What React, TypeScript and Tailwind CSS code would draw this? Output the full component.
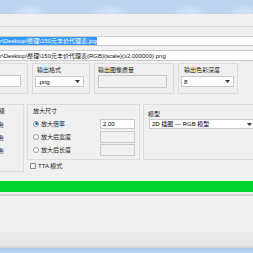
import React from "react";

const font = { fontFamily: '"Liberation Sans", "Noto Sans CJK SC", sans-serif' };

function Combo({ w, text }: { w: string; text: string }) {
  return (
    <div className={`${w} h-[11px] bg-white border border-[#c9c9c9] flex items-center justify-between pl-[2px] pr-[3px]`}>
      <span className="text-[6px] leading-none">{text}</span>
      <svg width="5" height="3" viewBox="0 0 5 3"><path d="M0 0h5L2.5 3z" fill="#333" /></svg>
    </div>
  );
}

function Radio({ on, label }: { on?: boolean; label: string }) {
  return (
    <div className="flex items-center gap-[2px] h-[13px]">
      <div className="w-[6px] h-[6px] rounded-full border border-[#9a9a9a] bg-white flex items-center justify-center">
        {on && <div className="w-[3px] h-[3px] rounded-full bg-[#2a6bd0]" />}
      </div>
      <span className="text-[6px] leading-none text-[#222]">{label}</span>
    </div>
  );
}

export default function App() {
  return (
    <div className="w-[253px] h-[253px] overflow-hidden bg-[#f0f0f0] relative" style={font}>
      {/* title bar */}
      <div className="h-[14px] bg-[#bdd4ee] bg-[radial-gradient(ellipse_18px_8px_at_30px_12px,#d6e6f7,transparent),radial-gradient(ellipse_20px_8px_at_110px_12px,#d3e4f6,transparent),radial-gradient(ellipse_18px_8px_at_190px_12px,#d3e4f6,transparent),radial-gradient(ellipse_16px_8px_at_245px_12px,#d3e4f6,transparent)]" />
      <div className="h-[13px] bg-[#f0f0f0] border-b border-[#dcdcdc]" />
      <div className="h-[9px]" />
      {/* input 1 */}
      <div className="h-[10px] bg-white border-y border-[#c9c9c9] flex items-center">
        <span className="bg-[#3399ff] text-white text-[6px] leading-[8px] whitespace-nowrap">r\Desktop\整理\150元丰价代理表.jpg</span>
      </div>
      <div className="h-[4px]" />
      <div className="h-[11px] bg-white border-y border-[#c9c9c9] flex items-center">
        <span className="text-[6px] leading-none whitespace-nowrap text-[#111]">r\Desktop\整理\150元丰价代理表(RGB)(scale)(x2.000000).png</span>
      </div>
      {/* row 1 groups */}
      <div className="flex mt-[2px] h-[31px]">
        <div className="w-[28px] border border-l-0 border-[#dcdcdc] flex items-end pb-[6px]">
          <div className="w-[21px] h-[12px] bg-white border border-l-0 border-[#c9c9c9]" />
        </div>
        <div className="w-[58px] ml-[4px] border border-[#dcdcdc] px-[2px] pt-[2px]">
          <div className="text-[6px] leading-[8px] pl-[2px] text-[#222]">输出格式</div>
          <div className="mt-[2px]"><Combo w="w-[49px]" text=".png" /></div>
        </div>
        <div className="w-[80px] ml-[4px] border border-[#dcdcdc] px-[3px] pt-[2px]">
          <div className="text-[6px] leading-[8px] text-[#222]">输出图像质量</div>
          <div className="mt-[1px] w-[69px] h-[13px] border border-[#c6c6c6] bg-[#f0f0f0]" />
        </div>
        <div className="w-[60px] ml-[4px] border border-[#dcdcdc] px-[2px] pt-[2px]">
          <div className="text-[6px] leading-[8px] pl-[3px] text-[#222]">输出色彩深度</div>
          <div className="mt-[2px]"><Combo w="w-[53px]" text="8" /></div>
        </div>
      </div>
      {/* row 2 */}
      <div className="flex mt-[10px]">
        <div className="w-[27px] h-[68px] border border-l-0 border-[#dcdcdc] pt-[3px] text-[6px] leading-none text-[#222] overflow-hidden">
          <div className="-ml-[1px] h-[10px]">级</div>
          <div className="-ml-[2px] h-[13px] mt-[4px]">务</div>
          <div className="-ml-[2px] h-[13px]">务</div>
          <div className="-ml-[2px] h-[13px]">务</div>
        </div>
        <div className="ml-[3px] flex flex-col">
          <div className="w-[113px] h-[56px] border border-[#dcdcdc] pl-[5px] pt-[2px]">
            <div className="text-[6px] leading-[8px] text-[#222]">放大尺寸</div>
            <div className="flex">
              <div className="flex flex-col w-[67px] pt-[2px]">
                <Radio on label="放大倍率" />
                <Radio label="放大后宽度" />
                <Radio label="放大后长度" />
              </div>
              <div className="flex flex-col pt-[4px]">
                <div className="w-[35px] h-[10px] bg-white border border-[#c9c9c9] text-[6px] leading-[8px] pl-[2px]">2.00</div>
                <div className="w-[35px] h-[12px] mt-[2px] bg-[#f0f0f0] border border-[#c9c9c9]" />
                <div className="w-[35px] h-[12px] mt-[1px] bg-[#f0f0f0] border border-[#c9c9c9]" />
              </div>
            </div>
          </div>
          <div className="flex items-center gap-[2px] mt-[3px] ml-[3px]">
            <div className="w-[6px] h-[6px] border border-[#8f8f8f] bg-[#f4f4f4]" />
            <span className="text-[6px] leading-none text-[#222]">TTA 模式</span>
          </div>
        </div>
        <div className="ml-[3px] w-[110px] h-[56px] border border-r-0 border-[#dcdcdc] pl-[5px] pt-[5px]">
          <div className="text-[6px] leading-[8px] text-[#222] -ml-[1px]">模型</div>
          <div className="mt-[1px] w-[110px] h-[10px] bg-white border border-[#c9c9c9] flex items-center justify-between pl-[2px] pr-[6px]">
            <span className="text-[6px] leading-none">2D 插图 — RGB 模型</span>
            <svg width="5" height="3" viewBox="0 0 5 3"><path d="M0 0h5L2.5 3z" fill="#333" /></svg>
          </div>
        </div>
      </div>
      {/* progress */}
      <div className="absolute left-0 right-0 top-[180px]">
        <div className="h-[1px] bg-[#e6f7e6]" />
        <div className="h-[11px] bg-[#00d22e]" />
        <div className="h-[2px] bg-[#f0f0f0]" />
        <div className="h-[2px] bg-[#d4d4d4]" />
        <div className="h-[36px] bg-[#f0f0f0]" />
        <div className="h-[14px] bg-[#e9e9e9]" />
        <div className="h-[2px] bg-[#d6d6d6]" />
        <div className="h-[5px] bg-gradient-to-b from-[#a9c8ee] to-[#bcd6f3]" />
      </div>
    </div>
  );
}
